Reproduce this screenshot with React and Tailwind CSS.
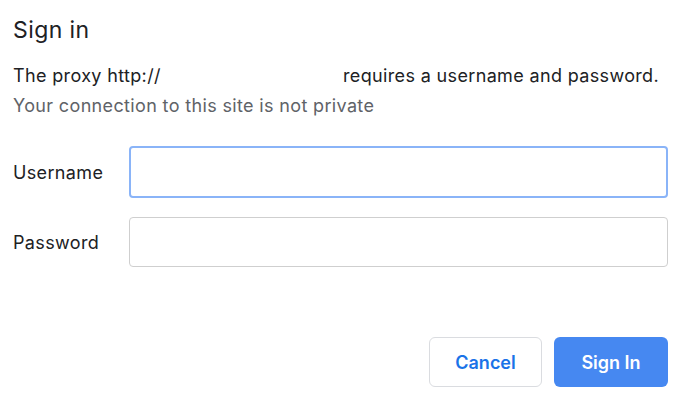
import React from "react";

export default function App() {
  return (
    <div
      className="w-[687px] h-[404px] bg-white text-[#202124] pl-[13px] pr-[19px] pt-[16px] tracking-[0.35px]"
      style={{ fontFamily: "Inter, 'Noto Sans', sans-serif" }}
    >
      {/* Title */}
      <h1 className="text-[23px] leading-[28px] font-normal tracking-[0.4px]">Sign in</h1>

      {/* Message */}
      <p className="mt-[17px] text-[18px] leading-[30px] whitespace-nowrap">
        <span className="inline-block w-[330px]">The proxy http://</span>
        requires a username and password.
      </p>
      <p className="text-[18px] leading-[30px] text-[#5f6368]">
        Your connection to this site is not private
      </p>

      {/* Fields */}
      <div className="mt-[25px] flex flex-col gap-[19px]">
        <div className="flex items-center">
          <label className="w-[116px] text-[18px]">Username</label>
          <input
            type="text"
            className="flex-1 h-[52px] rounded-[4px] border-2 border-[#8ab4f8] outline-none px-3"
          />
        </div>
        <div className="flex items-center">
          <label className="w-[116px] text-[18px]">Password</label>
          <input
            type="password"
            className="flex-1 h-[50px] rounded-[4px] border border-[#cfcfcf] outline-none px-3"
          />
        </div>
      </div>

      {/* Buttons */}
      <div className="mt-[70px] flex justify-end gap-[12px]">
        <button className="w-[113px] h-[50px] rounded-[6px] border border-[#dadce0] bg-white text-[#1a73e8] text-[18px] font-semibold tracking-normal">
          Cancel
        </button>
        <button className="w-[114px] h-[50px] rounded-[6px] bg-[#4688f1] text-white text-[18px] font-semibold tracking-normal">
          Sign In
        </button>
      </div>
    </div>
  );
}
